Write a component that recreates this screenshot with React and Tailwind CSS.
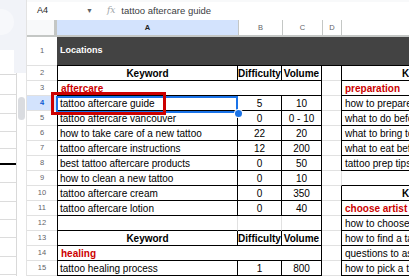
import React from 'react'

const font = "font-['Liberation_Sans',Arial,sans-serif]"

const rows = [
  { n: 2, kind: 'head', e: { t: 'Keyword', kind: 'head' } },
  { n: 3, kind: 'cat', a: 'aftercare', e: { t: 'preparation', kind: 'cat' } },
  { n: 4, a: 'tattoo aftercare guide', b: '5', c: '10', e: { t: 'how to prepare for a tattoo' } },
  { n: 5, a: 'tattoo aftercare vancouver', b: '0', c: '0 - 10', e: { t: 'what to do before a tattoo' } },
  { n: 6, a: 'how to take care of a new tattoo', b: '22', c: '20', e: { t: 'what to bring to a tattoo' } },
  { n: 7, a: 'tattoo aftercare instructions', b: '12', c: '200', e: { t: 'what to eat before a tattoo' } },
  { n: 8, a: 'best tattoo aftercare products', b: '0', c: '50', e: { t: 'tattoo prep tips' } },
  { n: 9, a: 'how to clean a new tattoo', b: '0', c: '10', e: null },
  { n: 10, a: 'tattoo aftercare cream', b: '0', c: '350', e: { t: 'Keyword', kind: 'head' } },
  { n: 11, a: 'tattoo aftercare lotion', b: '0', c: '40', e: { t: 'choose artist', kind: 'cat' } },
  { n: 12, kind: 'blank', e: { t: 'how to choose a tattoo artist' } },
  { n: 13, kind: 'head', e: { t: 'how to find a tattoo artist' } },
  { n: 14, kind: 'cat', a: 'healing', e: { t: 'questions to ask a tattoo artist' } },
  { n: 15, a: 'tattoo healing process', b: '1', c: '800', e: { t: 'how to pick a tattoo artist' } },
]

const cell = 'h-[15px] flex items-center overflow-hidden whitespace-nowrap border-b text-[10px]'

function RowNum({ n }) {
  const active = n === 4
  return (
    <div
      className={`h-[15px] flex items-center justify-center border-b border-[#e1e1e1] text-[7.5px] ${
        active ? 'bg-[#d3e3fd] font-bold text-[#0b57d0]' : 'bg-white text-[#5f6368]'
      }`}
    >
      {n}
    </div>
  )
}

function LeftCells({ row }) {
  if (row.kind === 'cat') {
    return (
      <div className={`${cell} col-span-3 border-l border-r border-black px-[3px] text-[9.5px] font-bold text-[#cc0000]`}>
        {row.a}
      </div>
    )
  }
  if (row.kind === 'blank') {
    return (
      <>
        <div className={`${cell} border-l border-l-black border-r border-r-[#e1e1e1] border-b-black`} />
        <div className={`${cell} border-r border-r-[#e1e1e1] border-b-black`} />
        <div className={`${cell} border-r border-r-black border-b-black`} />
      </>
    )
  }
  const head = row.kind === 'head'
  const txt = head ? 'text-[9px] font-bold' : ''
  return (
    <>
      <div className={`${cell} border-l border-r border-black ${head ? 'justify-center' : 'pl-[2px]'} ${txt}`}>
        {head ? 'Keyword' : row.a}
      </div>
      <div className={`${cell} border-r border-black justify-center ${txt}`}>{head ? 'Difficulty' : row.b}</div>
      <div className={`${cell} border-r border-black justify-center ${txt}`}>{head ? 'Volume' : row.c}</div>
    </>
  )
}

function RightCell({ e }) {
  if (!e) return <div className={`${cell} border-l border-l-[#e1e1e1] border-b-black`} />
  if (e.kind === 'head') {
    return <div className={`${cell} border-l border-black pl-[60px] text-[9px] font-bold`}>{e.t}</div>
  }
  return (
    <div
      className={`${cell} border-l border-black px-[3px] ${
        e.kind === 'cat' ? 'text-[9.5px] font-bold text-[#cc0000]' : ''
      }`}
    >
      {e.t}
    </div>
  )
}

function LeftStrip() {
  const lines = [20, 19, 18, 17, 16, 18, 19, 18, 18, 19, 18]
  return (
    <div className="w-[27px] shrink-0 flex flex-col border-r border-[#e3e3e3] bg-white">
      <div className="relative h-[73px] bg-[#f1f3f8] flex flex-col justify-end">
        <div className="absolute left-[-12px] top-[9px] h-[26px] w-[26px] rounded-full bg-[#f7f8fb]" />
        <div className="h-[23px] w-[14px] bg-white" />
      </div>
      <div className="flex flex-1">
        <div className="w-[17px] border-r border-[#d9d9d9] flex flex-col">
          <div className="h-[2px] border-b border-[#d9d9d9]" />
          {lines.map((h, i) => (
            <div
              key={i}
              style={{ height: h }}
              className={i === 4 ? 'border-b-2 border-black' : 'border-b border-[#dcdcdc]'}
            />
          ))}
        </div>
        <div className="flex-1 pt-[24px] px-[1px]">
          <div className="h-[23px] w-[7px] rounded-full bg-[#dadce0]" />
        </div>
      </div>
    </div>
  )
}

export default function App() {
  return (
    <div className={`relative flex h-[276px] w-[409px] overflow-hidden bg-white text-black ${font}`}>
      <LeftStrip />
      <div className="flex-1 flex flex-col min-w-0">
        {/* formula bar */}
        <div className="h-[21px] flex items-center border-t-2 border-[#f8f9fa] text-[9px]">
          <span className="ml-[10px] w-[49px] text-[#1f1f1f]">A4</span>
          <span className="text-[7px] text-[#5f6368]">▼</span>
          <span className="ml-[14px] font-['DejaVu_Serif',serif] italic text-[9px] text-[#a0a4a8]">fx</span>
          <span className="ml-[6px] text-[9.5px] text-[#3c4043]">tattoo aftercare guide</span>
        </div>
        {/* grid */}
        <div className="grid grid-cols-[30px_181px_44px_40px_19px_1fr]">
          <div className="h-[17px] bg-[#f8f9fa] border-r-[3px] border-b-2 border-[#c4c7c5]" />
          <div className="h-[17px] flex items-center justify-center bg-[#d3e3fd] border-b-2 border-[#c4c7c5] text-[7.5px] font-bold text-[#1f1f1f]">A</div>
          {['B', 'C', 'D', ''].map((l, i) => (
            <div
              key={i}
              className="h-[17px] flex items-center justify-center border-l border-b-2 border-[#c4c7c5] text-[7.5px] text-[#5f6368] bg-white"
            >
              {l}
            </div>
          ))}

          <div className="h-[29px] flex items-center justify-center border-b border-[#e1e1e1] text-[7.5px] text-[#5f6368]">1</div>
          <div className="col-span-5 h-[29px] flex items-center bg-[#434343] px-[3px] text-[9px] font-bold text-white border-b border-black">
            Locations
          </div>

          {rows.map((row) => (
            <React.Fragment key={row.n}>
              <RowNum n={row.n} />
              <LeftCells row={row} />
              <div className={`${cell} border-[#e1e1e1]`} />
              <RightCell e={row.e} />
            </React.Fragment>
          ))}
        </div>
      </div>

      {/* selection + annotation overlays */}
      <div className="absolute left-[56px] top-[96px] h-[17px] w-[182px] border-2 border-[#1a73e8]" />
      <div className="absolute left-[235px] top-[110px] h-[7px] w-[7px] rounded-full bg-[#1a73e8] ring-1 ring-white" />
      <div className="absolute left-[51px] top-[92px] h-[23px] w-[115px] border-[3px] border-[#cc0000]" />
    </div>
  )
}
